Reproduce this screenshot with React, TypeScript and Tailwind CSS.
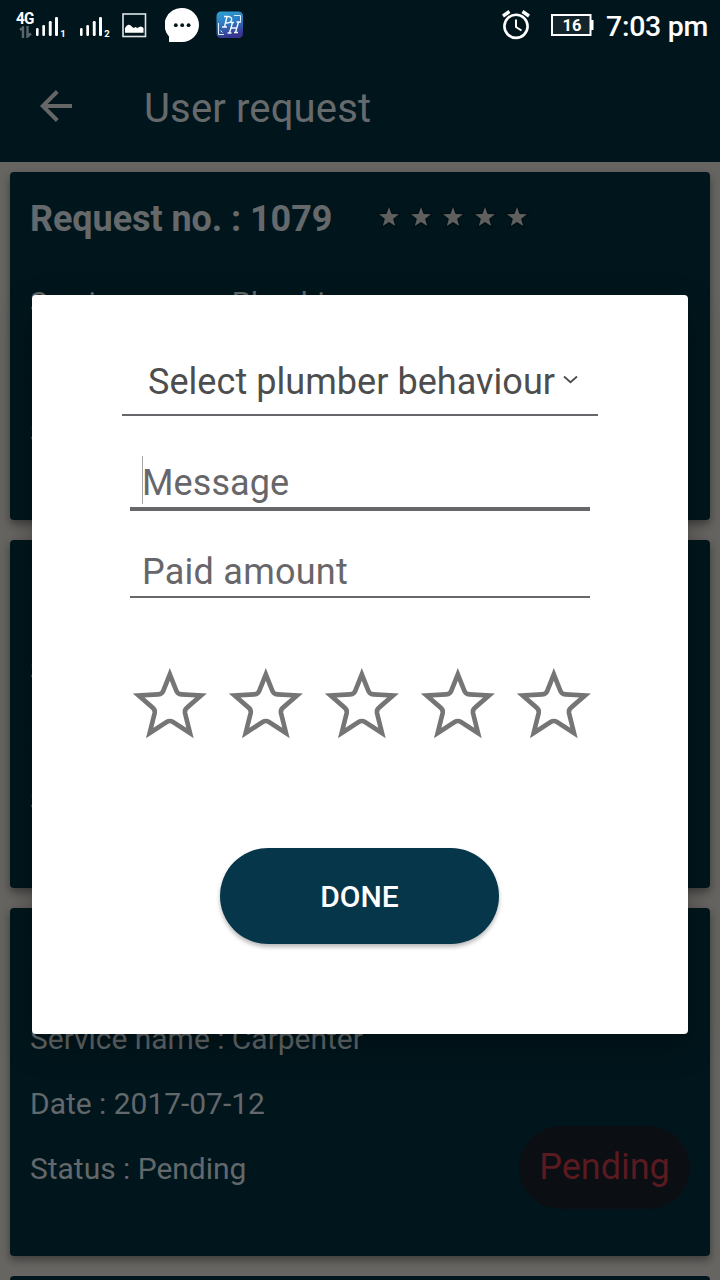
import React from "react";

type Request = {
  number: string;
  service: string;
  date: string;
  status: string;
};

const requests: Request[] = [
  { number: "1079", service: "Plumbing", date: "2017-07-14", status: "Complete" },
  { number: "1078", service: "Electrician", date: "2017-07-13", status: "Complete" },
  { number: "1077", service: "Carpenter", date: "2017-07-12", status: "Pending" },
];

const slots = [0, 1, 2, 3, 4];

function SignalBars({ sim }: { sim: string }) {
  return (
    <svg className="h-[24px] w-[32px]" viewBox="0 0 32 24" fill="#fff">
      <rect x="0" y="14" width="2.6" height="8" rx="1.2" />
      <rect x="6.3" y="11" width="2.7" height="11" rx="1.2" />
      <rect x="12.8" y="7" width="2.9" height="15" rx="1.2" />
      <rect x="19" y="3" width="3" height="19" rx="1.2" />
      <text x="24.2" y="22.6" fontSize="9.5" fontWeight="700" fontFamily="Roboto, sans-serif">
        {sim}
      </text>
    </svg>
  );
}

function StatusBar() {
  return (
    <div className="flex h-[50px] items-start text-white">
      <div className="ml-[16px] flex h-[42px] w-[19px] flex-col pt-[10px]">
        <span className="origin-left scale-x-90 text-[17px] leading-[16px] font-bold tracking-[-0.8px]">4G</span>
        <svg className="ml-[3px] h-[12px] w-[13px]" viewBox="0 0 13 12" fill="none" stroke="#59666b" strokeWidth="2.4">
          <path d="M1 4 L4 1.5 V12 M8.5 0 V10.5 L12 7.5" />
        </svg>
      </div>
      <div className="ml-[1px] pt-[14px]">
        <SignalBars sim="1" />
      </div>
      <div className="ml-[12px] pt-[14px]">
        <SignalBars sim="2" />
      </div>
      <svg className="mt-[13px] ml-[10px] h-[25px] w-[25px]" viewBox="0 0 25 25">
        <rect x="1" y="1" width="22.5" height="22.5" fill="none" stroke="#dfe5e6" strokeWidth="1.6" />
        <path d="M3 19.8 V15 Q5.500 10.500 8 12 L11.500 15 L13.5 14 L15.500 15 Q19 12 21.5 15 V19.8 Z" fill="#fff" />
      </svg>
      <svg className="mt-[8px] ml-[18px] h-[35px] w-[35px]" viewBox="0 0 35 35">
        <path d="M17 0 A17 17 0 1 1 17 34 H4 V28.5 A17 17 0 0 1 17 0 Z" fill="#fff" />
        <circle cx="10.8" cy="17.2" r="1.9" fill="#01161c" />
        <circle cx="17.2" cy="17.2" r="1.9" fill="#01161c" />
        <circle cx="23.6" cy="17.2" r="1.9" fill="#01161c" />
      </svg>
      <svg className="mt-[11px] ml-[16px] h-[28px] w-[28px]" viewBox="0 0 28 28">
        <defs>
          <linearGradient id="appTile" x1="0" y1="0" x2="0.25" y2="1">
            <stop offset="0" stopColor="#2fa3d4" />
            <stop offset="0.5" stopColor="#2e78c2" />
            <stop offset="1" stopColor="#39358f" />
          </linearGradient>
        </defs>
        <rect x="0.5" y="0.5" width="26.5" height="26.5" rx="4.5" fill="url(#appTile)" />
        <path d="M18 4.5 H24.5 V10 M2.500 12 V23.5 H8 M4.500 19.500 L6.500 21.500" fill="none" stroke="#d8eefa" strokeWidth="1" />
        <path
          d="M8 5.500 H12 Q16.500 6 15.500 9.500 Q14 12.500 9.500 12 M11 5.500 L8.500 16 M6 16 H11 M14.500 11.500 H18 M20.500 11 H25 M16.500 11.500 L13.500 22 M22.500 11 L19.500 21.500 M11.500 22 H15.500 M18 21.500 H22 M15 17 H21"
          fill="none"
          stroke="#eefaff"
          strokeWidth="1.4"
        />
      </svg>
      <svg className="mt-[10px] ml-auto h-[30px] w-[30px]" viewBox="0 0 30 30" fill="none" stroke="#fff">
        <circle cx="15" cy="16.3" r="11.6" strokeWidth="2.6" />
        <path d="M15 9.5 V17 L20.5 20.5" strokeWidth="2" />
        <path d="M2 6 L8.500 1.5 M21.500 1.5 L28 6" strokeWidth="3.4" />
      </svg>
      <svg className="mt-[13px] ml-[20px] h-[24px] w-[43px]" viewBox="0 0 43 24">
        <rect x="1" y="2" width="38.5" height="20" fill="#13242b" stroke="#fff" strokeWidth="2" />
        <rect x="40" y="7" width="2.5" height="10" fill="#fff" />
        <text x="21" y="18.3" textAnchor="middle" fontSize="16.5" fontWeight="700" fontFamily="Roboto, sans-serif" fill="#fff">
          16
        </text>
      </svg>
      <span className="mt-[10px] mr-[12px] ml-[12px] text-[28.5px] leading-[34px] font-medium tracking-[-0.3px] whitespace-nowrap">
        7:03 pm
      </span>
    </div>
  );
}

function AppBar() {
  return (
    <div className="flex h-[112px] items-center">
      <svg className="ml-[40px] h-[32px] w-[32px]" viewBox="0 0 32 32" fill="none" stroke="#666" strokeWidth="4">
        <path d="M17.3 1.5 L2.8 16 L17.3 30.5 M3 16 H32" />
      </svg>
      <h1 className="mt-[6px] ml-[72px] text-[40px] leading-[48px] font-normal tracking-[0.15px] text-[#666a6c]">User request</h1>
    </div>
  );
}

function SmallStar() {
  return (
    <svg className="h-[32px] w-[32px]" viewBox="0 0 32 32">
      <path
        d="M16 6 L18.5 13 L26 13.2 L20.1 17.8 L22.2 25 L16 20.9 L9.8 25 L11.9 17.8 L6 13.2 L13.5 13 Z"
        fill="#5f605e"
        stroke="#010e13"
        strokeWidth="2.5"
        paintOrder="stroke"
      />
    </svg>
  );
}

function RequestCard({ request }: { request: Request }) {
  return (
    <article className="h-[348px] shrink-0 rounded-[4px] bg-[#01161c] px-[20px] pt-[27px] text-[#62686b] shadow-[0_4px_9px_rgba(0,0,0,0.4)]">
      <div className="flex h-[40px] items-center">
        <h2 className="w-[343px] text-[36px] leading-[40px] font-bold tracking-[-0.07px] whitespace-nowrap text-[#66696b]">
          Request no. : {request.number}
        </h2>
        <div className="-mt-[5px] flex">
          {slots.map((s) => (
            <SmallStar key={s} />
          ))}
        </div>
      </div>
      <div className="mt-[31px] flex">
        <div className="flex-1 text-[30px] leading-[65px] tracking-[-0.03px]">
          <p>Service name : {request.service}</p>
          <p>Date : {request.date}</p>
          <p>Status : {request.status}</p>
        </div>
        {request.status === "Pending" && (
          <div className="mt-[120px] flex h-[83px] w-[171px] items-center justify-center rounded-full bg-[#0b0e13] pb-[2px] text-[36px] text-[#591a20]">
            Pending
          </div>
        )}
      </div>
    </article>
  );
}

function RatingStar() {
  return (
    <svg className="h-[96px] w-[96px]" viewBox="6 18 288 288" fill="none" stroke="#757575" strokeWidth="14" strokeMiterlimit="10">
      <path d="M149.500 73 L168.500 121 Q172 132.500 184 133 L243 136.500 L202 172 Q193 179 195 189 L210 249 L159 216 Q149.500 210 140 216 L89 249 L104 189 Q106 179 97 172 L56 136.500 L115 133 Q127 132.500 130.500 121 Z" />
    </svg>
  );
}

function FeedbackDialog() {
  return (
    <div
      role="dialog"
      className="absolute top-[295px] left-[32px] flex h-[739px] w-[656px] flex-col items-center rounded-[4px] bg-white text-[36px] text-[#67666a] shadow-[0_12px_32px_rgba(0,0,0,0.3)]"
    >
      <div className="flex h-[121px] w-[476px] items-end border-b-2 border-[#67666a] pb-[10px] pl-[26px] text-[#4d4d4d]">
        <span className="leading-[44px] tracking-[0.05px] whitespace-nowrap">Select plumber behaviour</span>
        <svg className="mb-[20px] ml-[8px] h-[9px] w-[15px]" viewBox="0 0 15 9" fill="none" stroke="#4d4d4d" strokeWidth="1.8">
          <path d="M1 1.500 L7.500 7.200 L14 1.500" />
        </svg>
      </div>
      <div className="flex h-[95px] w-[460px] items-end border-b-4 border-[#67666a] pl-[12px]">
        <span className="mb-[3px] h-[48px] w-px bg-[#a5a5a5]" />
        <span className="-ml-px leading-[48px] tracking-[0.1px]">Message</span>
      </div>
      <div className="flex h-[87px] w-[460px] items-end border-b-2 border-[#67666a] pl-[12px]">
        <span className="leading-[48px] tracking-[0.25px]">Paid amount</span>
      </div>
      <div className="mt-[58px] ml-[4px] flex">
        {slots.map((s) => (
          <RatingStar key={s} />
        ))}
      </div>
      <button className="mt-[96px] mr-[1px] flex h-[96px] w-[279px] items-center justify-center rounded-full bg-[#05364a] text-[30px] font-medium text-white shadow-[0_3px_4px_rgba(0,0,0,0.28)]">
        DONE
      </button>
    </div>
  );
}

export default function App() {
  return (
    <div className="relative flex h-[1280px] w-[720px] flex-col overflow-hidden bg-[#666562] font-['Roboto',sans-serif]">
      <header className="h-[162px] shrink-0 bg-[#01161c]">
        <StatusBar />
        <AppBar />
      </header>
      <main className="flex flex-col gap-[20px] px-[10px] pt-[10px]">
        {requests.map((r) => (
          <RequestCard key={r.number} request={r} />
        ))}
        <div className="h-[4px] rounded-t-[4px] bg-[#01161c]" />
      </main>
      <FeedbackDialog />
    </div>
  );
}
